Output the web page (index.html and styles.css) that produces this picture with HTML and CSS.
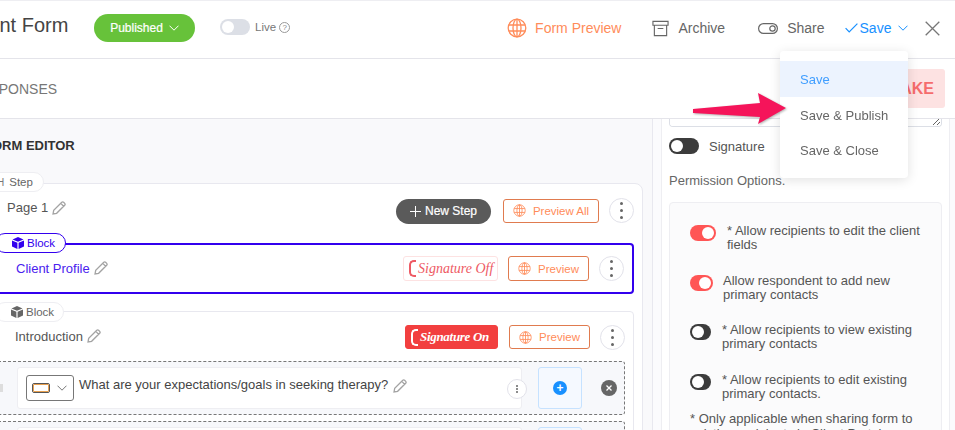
FILE: index.html
```html
<!DOCTYPE html>
<html lang="en">
<head>
  <meta charset="UTF-8">
  <meta name="viewport" content="width=device-width, initial-scale=1.0">
  <title>Client Form</title>
  <link rel="stylesheet" href="styles.css">
</head>
<body>
  <svg class="sprite" xmlns="http://www.w3.org/2000/svg">
    <symbol id="globe" viewBox="0 0 20 20">
      <g fill="none" stroke="currentColor" stroke-width="1.3">
        <circle cx="10" cy="10" r="8.8"/>
        <ellipse cx="10" cy="10" rx="4" ry="8.8"/>
        <path d="M10 1.2v17.6M1.8 7h16.4M1.8 13h16.4"/>
      </g>
    </symbol>
    <symbol id="pencil" viewBox="0 0 14 14">
      <path d="M1 13l.7-3.6L9.800 1.300a1.300 1.300 0 0 1 1.800 0l1.100 1.100a1.300 1.300 0 0 1 0 1.800L4.600 12.300z M8.800 2.400l2.800 2.800" fill="none" stroke="#a3a3a3" stroke-width="1.300"/>
    </symbol>
    <symbol id="cube" viewBox="0 0 12 12">
      <path d="M6 0l5.500 2.400L6 4.800.5 2.400zM0 3.400l5.400 2.400V12L0 9.500zM12 3.400L6.600 5.800V12L12 9.500z" fill="currentColor"/>
    </symbol>
    <symbol id="chevron" viewBox="0 0 10 6">
      <path d="M.5.7L5 5.200 9.500.7" fill="none" stroke="currentColor" stroke-width="1"/>
    </symbol>
  </svg>

  <div class="page">
    <header class="topbar">
      <h1 class="form-title">Client Form</h1>
      <button class="status-pill">Published <svg class="pill-chevron"><use href="#chevron"/></svg></button>
      <span class="live-toggle"><span class="knob"></span></span>
      <span class="live-label">Live</span>
      <span class="help-dot">?</span>

      <div class="top-actions">
        <a class="action action-preview"><svg class="icon-globe"><use href="#globe"/></svg>Form Preview</a>
        <a class="action action-archive">
          <svg class="icon-archive" viewBox="0 0 18 17"><path d="M1 1h16v4H1zM2.500 5v11h13V5M6 8.500h6" fill="none" stroke="#666" stroke-width="1.200"/></svg>
          Archive
        </a>
        <a class="action action-share">
          <svg class="icon-share" viewBox="0 0 20 11"><rect x=".6" y=".6" width="18.800" height="9.800" rx="4.900" fill="none" stroke="#666" stroke-width="1.200"/><circle cx="14.500" cy="5.500" r="2.700" fill="none" stroke="#666" stroke-width="1.200"/></svg>
          Share
        </a>
        <a class="action action-save">
          <svg class="icon-check" viewBox="0 0 13 10"><path d="M.6 5.200l3.600 3.800L12.400.7" fill="none" stroke="#1890ff" stroke-width="1.200"/></svg>
          Save
          <svg class="save-chevron"><use href="#chevron"/></svg>
        </a>
        <svg class="icon-close" viewBox="0 0 15 15"><path d="M.7.7l13.600 13.600M14.300.7L.7 14.300" fill="none" stroke="#777" stroke-width="1.300"/></svg>
      </div>
    </header>

    <nav class="tabs">
      <span class="tab">RESPONSES</span>
      <span class="make-badge">MAKE</span>
    </nav>

    <main class="workspace">
      <section class="editor">
        <h2 class="editor-title">FORM EDITOR</h2>

        <div class="step-card">
          <span class="tag tag-step"><b class="step-mark">H</b>Step</span>
          <div class="card-head step-head">
            <span class="item-name">Page 1</span>
            <svg class="icon-pencil"><use href="#pencil"/></svg>
            <button class="btn-new-step">
              <svg class="icon-plus" viewBox="0 0 11 11"><path d="M5.500 0v11M0 5.500h11" stroke="#fff" stroke-width="1"/></svg>
              New Step
            </button>
            <button class="btn-preview btn-preview-all"><svg class="icon-mini-globe"><use href="#globe"/></svg>Preview All</button>
            <span class="kebab"><i></i><i></i><i></i></span>
          </div>

          <div class="block block-active">
            <span class="tag tag-active"><svg class="icon-cube"><use href="#cube"/></svg>Block</span>
            <div class="card-head block-head">
              <span class="item-name">Client Profile</span>
              <svg class="icon-pencil"><use href="#pencil"/></svg>
              <span class="signature signature-off"><span class="sig-c"></span>Signature Off</span>
              <button class="btn-preview"><svg class="icon-mini-globe"><use href="#globe"/></svg>Preview</button>
              <span class="kebab"><i></i><i></i><i></i></span>
            </div>
          </div>

          <div class="block block-plain">
            <span class="tag tag-plain"><svg class="icon-cube"><use href="#cube"/></svg>Block</span>
            <div class="card-head intro-head">
              <span class="item-name">Introduction</span>
              <svg class="icon-pencil"><use href="#pencil"/></svg>
              <span class="signature signature-on"><span class="sig-c"></span>Signature On</span>
              <button class="btn-preview"><svg class="icon-mini-globe"><use href="#globe"/></svg>Preview</button>
              <span class="kebab"><i></i><i></i><i></i></span>
            </div>

            <div class="field-row">
              <span class="drag-handle"></span>
              <div class="field-card">
                <span class="type-select">
                  <span class="type-box"></span>
                  <svg class="type-chevron"><use href="#chevron"/></svg>
                </span>
                <span class="field-text">What are your expectations/goals in seeking therapy?</span>
                <svg class="icon-pencil"><use href="#pencil"/></svg>
                <span class="kebab kebab-small"><i></i><i></i><i></i></span>
              </div>
              <div class="add-box"><span class="add-dot">+</span></div>
              <span class="remove-dot">
                <svg viewBox="0 0 8 8"><path d="M1.500 1.500l5 5M6.500 1.500l-5 5" stroke="#fff" stroke-width="1.300"/></svg>
              </span>
            </div>

            <div class="field-row">
              <span class="drag-handle"></span>
              <div class="field-card"></div>
              <div class="add-box"></div>
            </div>
          </div>
        </div>
      </section>

      <aside class="side-panel">
        <div class="side-card">
          <textarea class="side-textarea"></textarea>
          <div class="signature-row">
            <span class="switch switch-dark switch-signature"><span class="knob"></span></span>
            <span class="signature-label">Signature</span>
          </div>
          <p class="permission-title">Permission Options.</p>

          <div class="permission-box">
            <div class="permission-row row-one">
              <span class="switch switch-red"><span class="knob"></span></span>
              <p>* Allow recipients to edit the client fields</p>
            </div>
            <div class="permission-row row-two">
              <span class="switch switch-red switch-short"><span class="knob"></span></span>
              <p>Allow respondent to add new primary contacts</p>
            </div>
            <div class="permission-row row-three">
              <span class="switch switch-dark"><span class="knob"></span></span>
              <p>* Allow recipients to view existing primary contacts</p>
            </div>
            <div class="permission-row row-four">
              <span class="switch switch-dark"><span class="knob"></span></span>
              <p>* Allow recipients to edit existing primary contacts.</p>
            </div>
            <p class="permission-note">* Only applicable when sharing form to existing recipients in Client Portal</p>
          </div>
        </div>
      </aside>
    </main>

    <!-- save dropdown sits over the tabs and side panel -->
    <ul class="save-menu">
      <li class="active">Save</li>
      <li>Save &amp; Publish</li>
      <li>Save &amp; Close</li>
    </ul>

    <svg class="callout-arrow" viewBox="0 0 96 34">
      <path d="M1 17L68 11 66 1 94 16 66 32 68 25 1 21z" fill="#f5145a"/>
    </svg>
  </div>
</body>
</html>
```

FILE: styles.css
```css
* {
  box-sizing: border-box;
}

html, body {
  margin: 0;
  padding: 0;
  height: 100%;
  overflow: hidden;
}

body {
  font-family: "Liberation Sans", Arial, sans-serif;
  color: #444;
  background-color: #fff;
}

button {
  font-family: inherit;
  cursor: pointer;
}

.sprite {
  display: none;
}

.page {
  position: relative;
  width: 955px;
  height: 430px;
  overflow: hidden;
}

/* top bar */
.topbar {
  display: flex;
  align-items: center;
  height: 59px;
  border-top: 1px solid #eeeef2;
  border-bottom: 1px solid #e4e4ea;
}

.form-title {
  flex: none;
  width: 100px;
  margin: 0 0 8px -35px;
  font-size: 20px;
  font-weight: normal;
  color: #444;
  white-space: nowrap;
}

.status-pill {
  display: flex;
  align-items: center;
  justify-content: center;
  width: 101px;
  height: 28px;
  margin: -3px 0 0 29px;
  border: none;
  border-radius: 14px;
  background-color: #67c23a;
  color: #fff;
  font-size: 12px;
  -webkit-text-stroke: 0.2px #fff;
}

.pill-chevron {
  width: 10px;
  height: 6px;
  margin-left: 6px;
  color: #fff;
}

.live-toggle {
  position: relative;
  width: 30px;
  height: 16px;
  margin: -6px 0 0 25px;
  border-radius: 8px;
  background-color: #dcdfe6;
}

.live-toggle .knob {
  top: 2px;
  left: 2px;
}

.knob {
  position: absolute;
  width: 12px;
  height: 12px;
  border-radius: 50%;
  background-color: #fff;
}

.live-label {
  margin: -5px 0 0 5px;
  font-size: 11.5px;
  color: #777;
}

.help-dot {
  display: flex;
  align-items: center;
  justify-content: center;
  width: 11px;
  height: 11px;
  margin: -5px 0 0 3px;
  border: 1px solid #999;
  border-radius: 50%;
  font-size: 8px;
  color: #888;
}

.top-actions {
  display: flex;
  align-items: center;
  margin-left: 217px;
  margin-top: -3px;
}

.action {
  display: flex;
  align-items: center;
  font-size: 14px;
  color: #666;
  white-space: nowrap;
}

.action-preview {
  color: #ff8c5a;
}

.icon-globe {
  width: 20px;
  height: 20px;
  margin-right: 8px;
}

.action-archive {
  margin-left: 31px;
}

.icon-archive {
  width: 17px;
  height: 17px;
  margin-right: 9px;
}

.action-share {
  margin-left: 33px;
}

.icon-share {
  width: 20px;
  height: 11px;
  margin-right: 9px;
}

.action-save {
  margin-left: 20px;
  color: #1890ff;
}

.icon-check {
  width: 13px;
  height: 10px;
  margin-right: 2px;
}

.save-chevron {
  width: 10px;
  height: 6px;
  margin-left: 7px;
  color: #1890ff;
}

.icon-close {
  width: 15px;
  height: 15px;
  margin-left: 17px;
}

/* tabs row */
.tabs {
  display: flex;
  align-items: center;
  justify-content: space-between;
  height: 60px;
  border-bottom: 1px solid #e4e4ea;
  padding-right: 10px;
}

.tab {
  margin-left: -30px;
  font-size: 14px;
  color: #777;
}

.make-badge {
  display: flex;
  align-items: center;
  justify-content: flex-end;
  width: 80px;
  height: 39px;
  padding-right: 11px;
  border-radius: 3px;
  background-color: #fde2e2;
  color: #f56c6c;
  font-size: 16px;
  font-weight: bold;
}

/* body split */
.workspace {
  display: flex;
  height: 311px;
}

.editor {
  flex: none;
  width: 652px;
  padding-left: 0;
  background-color: #f9f9fb;
  overflow: hidden;
}

.editor-title {
  margin: 19px 0 29px -16px;
  font-size: 13px;
  line-height: 16px;
  color: #333;
}

.step-card {
  position: relative;
  width: 663px;
  margin-left: -20px;
  padding: 0 8px 0 14px;
  height: 300px;
  background-color: #fff;
  border: 1px solid #e8e8ef;
  border-radius: 8px;
}

.tag {
  position: absolute;
  display: flex;
  align-items: center;
  height: 20px;
  border: 1px solid #eeeef2;
  border-radius: 10px;
  background-color: #fff;
  font-size: 11.5px;
  color: #666;
}

.tag-step {
  top: -12px;
  left: -8px;
  width: 71px;
  padding-left: 23px;
}

.step-mark {
  margin-right: 5px;
  font-weight: normal;
  font-size: 10px;
  color: #777;
}

.tag-plain {
  top: -10px;
  left: 0;
  width: 69px;
  padding-left: 15px;
}

.tag-active {
  left: -1px;
  top: -12px;
  width: 71px;
  padding-left: 16px;
  border-color: #3300ee;
  color: #3300ee;
}

.icon-cube {
  width: 12px;
  height: 12px;
  margin-right: 3px;
}

.card-head {
  display: flex;
  align-items: center;
}

.step-head {
  height: 26px;
  margin-top: 13px;
  padding-left: 12px;
}

.item-name {
  font-size: 13px;
  color: #555;
  margin-top: -5px;
}

.icon-pencil {
  width: 14px;
  height: 14px;
  margin: -5px 0 0 4px;
}

.btn-new-step {
  display: flex;
  align-items: center;
  justify-content: center;
  width: 95px;
  height: 25px;
  margin-left: auto;
  margin-top: 2px;
  border: none;
  border-radius: 13px;
  background-color: #5a5a5a;
  color: #fff;
  font-size: 12px;
  -webkit-text-stroke: 0.2px #fff;
}

.icon-plus {
  width: 11px;
  height: 11px;
  margin-right: 4px;
}

.btn-preview {
  display: flex;
  align-items: center;
  justify-content: center;
  width: 81px;
  height: 25px;
  margin-left: 10px;
  border: 1px solid #e07b4f;
  border-radius: 3px;
  background-color: #fff;
  color: #ff8c5a;
  font-size: 11.5px;
}

.btn-preview-all {
  width: 96px;
  height: 24px;
  margin-left: 12px;
  margin-top: 1px;
}

.icon-mini-globe {
  width: 13px;
  height: 13px;
  margin-right: 7px;
}

.kebab {
  display: flex;
  flex-direction: column;
  align-items: center;
  justify-content: center;
  flex: none;
  gap: 4px;
  width: 25px;
  height: 25px;
  margin-left: 10px;
  border: 1px solid #e2e2ea;
  border-radius: 50%;
  background-color: #fff;
}

.kebab i {
  display: block;
  width: 3px;
  height: 3px;
  border-radius: 50%;
  background-color: #666;
}

.kebab-small {
  width: 20px;
  height: 20px;
  gap: 1px;
  margin-left: auto;
  margin-right: -6px;
  margin-top: 1px;
}

.kebab-small i {
  width: 2px;
  height: 2px;
  margin: 0;
}

.block {
  position: relative;
  width: 640px;
  margin-left: -1px;
  background-color: #fff;
  border-radius: 4px;
}

.block-active {
  height: 51px;
  margin-top: 20px;
  border: 2px solid #3300ee;
  padding: 0 8px 0 20px;
}

.block-head {
  height: 47px;
}

.block-active .item-name {
  color: #4a22ee;
}

.block-active .item-name,
.block-active .icon-pencil {
  margin-top: -1px;
}

.block-plain {
  margin-top: 17px;
  height: 200px;
  border: 1px solid #e8e8ef;
  padding: 0 8px 0 0;
}

.intro-head {
  height: 26px;
  margin-top: 12px;
  margin-bottom: 11px;
  padding-left: 20px;
}

.intro-head .item-name,
.intro-head .icon-pencil {
  margin-top: -2px;
}

.block-active .signature {
  margin-left: auto;
}

.intro-head .signature {
  margin-left: auto;
  height: 24px;
}

.intro-head .btn-preview {
  height: 24px;
  margin-left: 11px;
}

.signature {
  display: flex;
  align-items: center;
  width: 95px;
  height: 25px;
  padding-left: 5px;
  border: 1px solid #fde2e2;
  border-radius: 3px;
  font-family: "Liberation Serif", serif;
  font-size: 14px;
  font-style: italic;
  white-space: nowrap;
}

.signature-off {
  color: #ee5a64;
  background-color: #fff;
}

.signature-on {
  width: 93px;
  background-color: #f23f3f;
  border-color: #f23f3f;
  color: #fff;
  font-size: 13px;
  font-weight: bold;
  letter-spacing: -0.3px;
}

.sig-c {
  flex: none;
  width: 7px;
  height: 17px;
  margin-right: 2px;
  border: 2px solid currentColor;
  border-right: none;
  border-radius: 5px 0 0 5px;
}

.field-row {
  display: flex;
  align-items: center;
  height: 54px;
  margin-bottom: 6px;
  padding-left: 4px;
  border: 1px dashed #777;
  border-radius: 3px;
  background-color: #f7f8fb;
}

.drag-handle {
  width: 3px;
  height: 8px;
  flex: none;
  background-color: #ddd;
}

.field-card {
  display: flex;
  align-items: center;
  flex: none;
  width: 505px;
  height: 42px;
  margin-left: 14px;
  padding-left: 8px;
  border: 1px solid #eeeef2;
  border-radius: 3px;
  background-color: #fff;
}

.type-select {
  display: flex;
  align-items: center;
  flex: none;
  width: 48px;
  height: 26px;
  padding-left: 5px;
  border: 1px solid #777;
  border-radius: 3px;
}

.type-box {
  width: 18px;
  height: 10px;
  border: 1px solid #555;
  outline: 1px solid #e8a04f;
  outline-offset: -2px;
  border-radius: 2px;
}

.type-chevron {
  width: 10px;
  height: 6px;
  margin-left: 7px;
  color: #777;
}

.field-text {
  margin: -7px 0 0 5px;
  font-size: 13px;
  color: #444;
  white-space: nowrap;
}

.field-card .icon-pencil {
  margin: -5px 0 0 5px;
}

.add-box {
  display: flex;
  align-items: center;
  justify-content: center;
  flex: none;
  width: 44px;
  height: 42px;
  margin-left: 16px;
  border: 1px solid #c6e2ff;
  border-radius: 3px;
  background-color: #f5f9ff;
}

.add-dot {
  display: flex;
  align-items: center;
  justify-content: center;
  width: 14px;
  height: 14px;
  border-radius: 50%;
  background-color: #1890ff;
  color: #fff;
  font-size: 12px;
  font-weight: bold;
}

.remove-dot {
  display: flex;
  align-items: center;
  justify-content: center;
  flex: none;
  width: 16px;
  height: 16px;
  margin-left: 19px;
  border-radius: 50%;
  background-color: #666;
}

.remove-dot svg {
  width: 8px;
  height: 8px;
}

/* right side */
.side-panel {
  flex: none;
  width: 303px;
  padding: 0 5px 0 8px;
  border-left: 1px solid #e8e8ef;
  background-color: #fbfbfd;
}

.side-card {
  height: 330px;
  padding: 0 7px;
  border: 1px solid #eeeef2;
  border-top: none;
  background-color: #fff;
}

.side-textarea {
  display: block;
  width: 100%;
  height: 8px;
  padding: 0;
  border: 1px solid #dcdfe6;
  border-top: none;
  border-radius: 0 0 4px 4px;
  outline: none;
}

.signature-row {
  display: flex;
  align-items: center;
  margin-top: 11px;
}

.signature-label {
  margin-left: 10px;
  font-size: 13px;
  color: #555;
}

.switch {
  position: relative;
  flex: none;
  display: block;
  width: 21px;
  height: 16px;
  border-radius: 8px;
}

.switch-dark {
  background-color: #3c3c3c;
}

.switch-dark .knob {
  top: 2px;
  left: 2px;
}

.switch-red {
  width: 26px;
  background-color: #ff5555;
}

.switch-red .knob {
  top: 2px;
  right: 2px;
}

.switch-short {
  width: 23px;
}

.switch-signature {
  width: 30px;
}

.permission-title {
  margin: 19px 0 13px;
  font-size: 13px;
  line-height: 16px;
  color: #666;
}

.permission-box {
  height: 260px;
  padding: 21px 10px 0 20px;
  border: 1px solid #eeeef2;
  border-radius: 4px;
  background-color: #fbfbfc;
}

.permission-row {
  display: flex;
  align-items: flex-start;
}

.permission-row p {
  margin: 0 0 0 11px;
  font-size: 13px;
  line-height: 14px;
  color: #555;
  width: 200px;
}

.permission-row .switch {
  margin-top: 1px;
}

.row-one {
  margin-bottom: 22px;
}

.row-one p {
  width: 195px;
}

.row-two {
  margin-bottom: 21px;
}

.row-two p {
  margin-left: 10px;
}

.row-three {
  margin-bottom: 22px;
}

.permission-note {
  margin: 10px 0 0;
  font-size: 13px;
  line-height: 15px;
  color: #555;
}

/* overlays */
.save-menu {
  position: absolute;
  top: 51px;
  left: 780px;
  width: 128px;
  height: 127px;
  margin: 0;
  padding: 10px 0;
  list-style: none;
  border-radius: 4px;
  background-color: #fff;
  box-shadow: 0 2px 12px rgba(0, 0, 0, 0.12);
  font-size: 13px;
  color: #666;
}

.save-menu li {
  height: 36px;
  line-height: 38px;
  padding-left: 20px;
}

.save-menu li:last-child {
  line-height: 36px;
}

.save-menu li.active {
  background-color: #ecf3fe;
  color: #409eff;
}

.callout-arrow {
  position: absolute;
  top: 92px;
  left: 692px;
  width: 96px;
  height: 34px;
  filter: drop-shadow(1px 1px 1px rgba(0, 0, 0, 0.3));
}
```
